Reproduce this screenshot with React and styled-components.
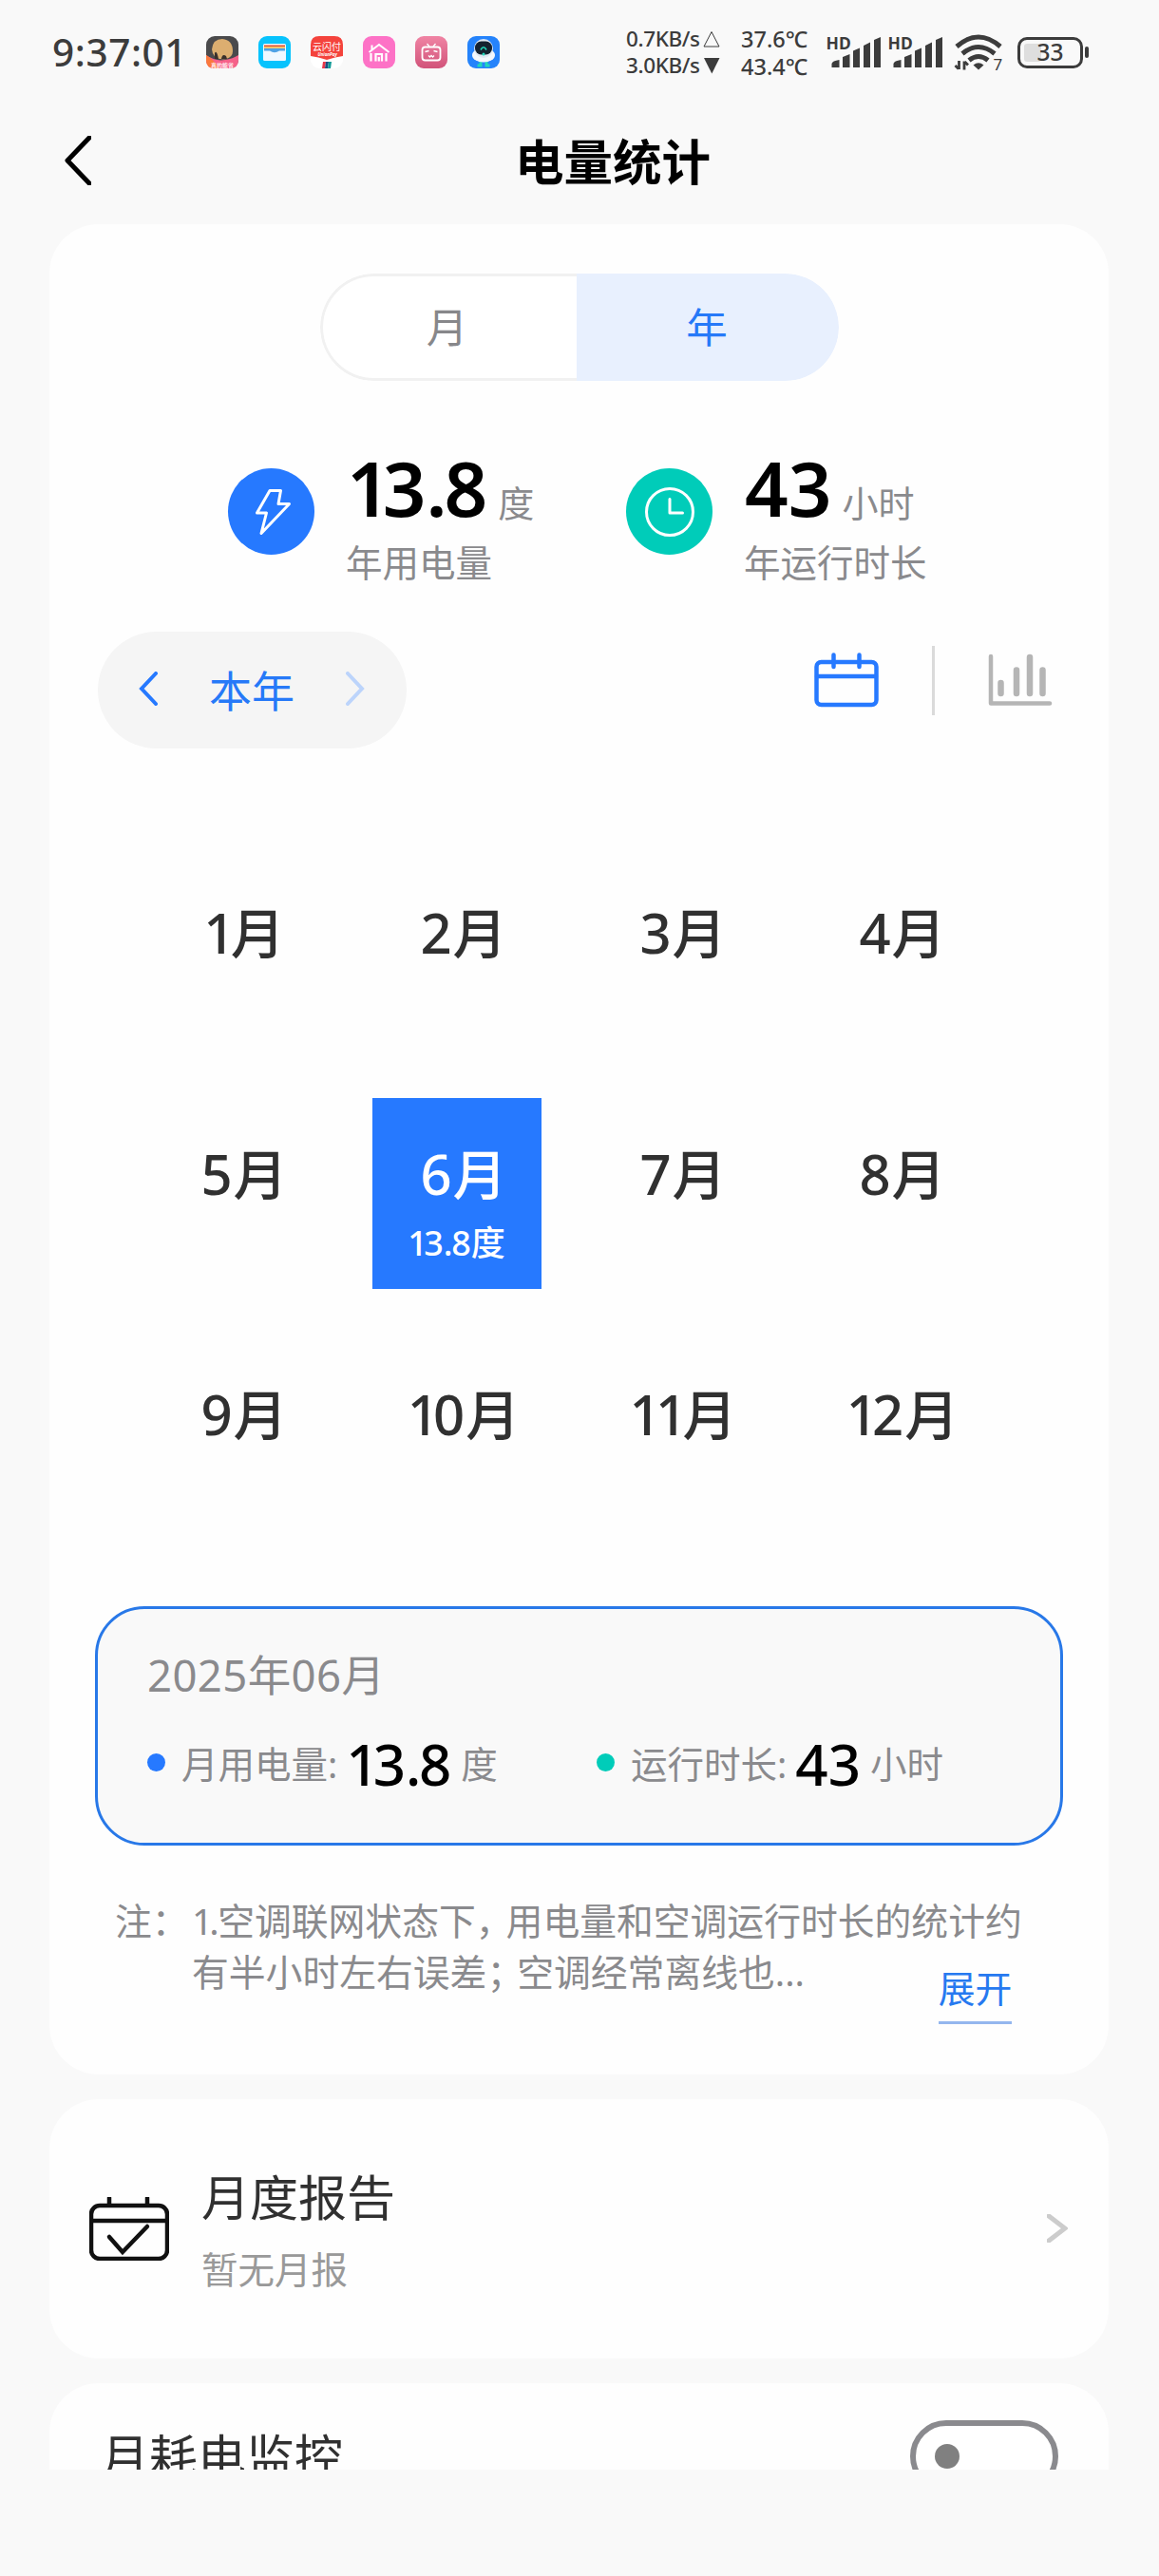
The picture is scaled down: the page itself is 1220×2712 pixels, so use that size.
import React from 'react'
import styled, { createGlobalStyle } from 'styled-components'

const months = ['1', '2', '3', '4', '5', '6', '7', '8', '9', '10', '11', '12']

function App() {
    return (
        <Page>
            <GlobalStyle />
            <StatusBar />
            <Header>
                <BackIcon viewBox="0 0 28 52">
                    <path d="M26 2 L3 26 L26 50" />
                </BackIcon>
                <Title>电量统计</Title>
            </Header>
            <Content>
                <StatsCard />
                <ReportCard>
                    <ReportIcon viewBox="0 0 84 67">
                        <path d="M21 1 V8 M61 1 V8" />
                        <rect x="2" y="9" width="80" height="56" rx="9" />
                        <path d="M2 25 H82" />
                        <path d="M21 42 L35 58 L61 31" />
                    </ReportIcon>
                    <ReportText>
                        <RowTitle>月度报告</RowTitle>
                        <RowHint>暂无月报</RowHint>
                    </ReportText>
                    <MoreIcon viewBox="0 0 22 30">
                        <path d="M2 2 L19 15 L2 28" />
                    </MoreIcon>
                </ReportCard>
                <MonitorCard>
                    <RowTitle>月耗电监控</RowTitle>
                    <Toggle>
                        <Knob />
                    </Toggle>
                </MonitorCard>
            </Content>
        </Page>
    )
}

export default App

// the figure 1 and the point are set narrower than the other figures
function Digits({ children }) {
    return children.split('').map((char, i) => {
        if (char === '1') return <One key={i}>1</One>
        if (char === '.') return <Point key={i}>.</Point>
        return char
    })
}

function StatusBar() {
    return (
        <Bar>
            <Time>9:37:01</Time>
            <AppIcons>
                <GameIcon />
                <WalletIcon />
                <PayIcon />
                <HomeIcon />
                <VideoIcon />
                <RobotIcon />
            </AppIcons>
            <Speeds>
                <Speed>0.7KB/s
                    <svg width="18" height="18" viewBox="0 0 18 18"><path d="M9 1.5 L17 17 H1 Z" fill="none" stroke="#3c3c3c" /></svg>
                </Speed>
                <Speed>3.0KB/s
                    <svg width="18" height="18" viewBox="0 0 18 18"><path d="M1 1 H17.5 L9.3 17.5 Z" fill="#3c3c3c" /></svg>
                </Speed>
            </Speeds>
            <Temps>
                <span>37.6℃</span>
                <span>43.4℃</span>
            </Temps>
            <Signal />
            <Signal />
            <WifiIcon viewBox="0 0 50 39">
                <path d="M2 13 Q25 -7 48 13" strokeWidth="5" />
                <path d="M8 20.5 Q25 6.5 42 20.5" strokeWidth="5" />
                <path d="M15 27.5 Q25 19.5 35 27.5" strokeWidth="5" />
                <path d="M19.5 32.5 Q25 28 30.5 32.5 L25 37.5 Z" fill="#3c3c3c" stroke="none" />
                <path d="M4.5 28 V37 M0.5 33 L4 36.5 M10 37.5 V28.5 M14 32.5 L10.5 29" strokeWidth="2.8" />
                <text x="40.5" y="38" fontSize="17" fill="#3c3c3c" stroke="none">7</text>
            </WifiIcon>
            <Battery>
                <BatteryFill />
                <BatteryText>33</BatteryText>
            </Battery>
            <BatteryCap />
        </Bar>
    )
}

function Signal() {
    return (
        <SignalIcon viewBox="0 0 55 34">
            <text x="-3.5" y="14" fontSize="17.5" fontWeight="700">HD</text>
            <path d="M2.5 33 V29 Q3 26 10.500 25 V33 Z M14 33 V22 L21.5 19 V33 Z M25 33 V15.500 L32 12.500 V33 Z M36 33 V10 L43 6.500 V33 Z M47 33 V4 L54 1 V33 Z" />
        </SignalIcon>
    )
}

function StatsCard() {
    return (
        <Card>
            <Tabs>
                <Tab>月</Tab>
                <Tab $active>年</Tab>
            </Tabs>
            <Summary>
                <Stat $width={419}>
                    <StatIcon $color="#2679ff">
                        <svg width="91" height="91" viewBox="0 0 91 91">
                            <path d="M44 23.5 H55.5 L53 37.5 H64.5 L35 68.5 L40.5 47 H30.5 Z" />
                        </svg>
                    </StatIcon>
                    <div>
                        <StatValue>
                            <BigNum><Digits>13.8</Digits></BigNum>
                            <Unit>度</Unit>
                        </StatValue>
                        <StatLabel>年用电量</StatLabel>
                    </div>
                </Stat>
                <Stat>
                    <StatIcon $color="#00ccb9">
                        <svg width="91" height="91" viewBox="0 0 91 91">
                            <circle cx="46" cy="46" r="24.5" />
                            <path d="M46 32.5 V47 H59.5" />
                        </svg>
                    </StatIcon>
                    <div>
                        <StatValue>
                            <BigNum>43</BigNum>
                            <Unit>小时</Unit>
                        </StatValue>
                        <StatLabel>年运行时长</StatLabel>
                    </div>
                </Stat>
            </Summary>
            <Toolbar>
                <YearPicker>
                    <Arrow viewBox="0 0 20 36"><path d="M18 2 L3 18 L18 34" /></Arrow>
                    <span>本年</span>
                    <Arrow viewBox="0 0 20 36" $muted><path d="M2 2 L17 18 L2 34" /></Arrow>
                </YearPicker>
                <Views>
                    <svg width="68" height="58" viewBox="0 0 68 58" fill="none" stroke="#2679ff" strokeWidth="4.5" strokeLinecap="round">
                        <rect x="2.5" y="10" width="63" height="45" rx="5" />
                        <path d="M3 25 H65" />
                        <path d="M20.5 2.5 V15 M47.5 2.5 V15" />
                    </svg>
                    <Divider />
                    <svg width="68" height="56" viewBox="0 0 68 56" fill="none" stroke="#b5b5b5" strokeLinecap="round">
                        <path d="M3 3 V52.5 H65" strokeWidth="4.5" strokeLinejoin="round" />
                        <path d="M13.5 31 V42 M30 17.5 V42 M44 4 V42 M57.5 17.5 V42" strokeWidth="6.5" />
                    </svg>
                </Views>
            </Toolbar>
            <MonthGrid>
                {months.map(m => (
                    <Month key={m} $active={m === '6'}>
                        <MonthName><Digits>{m}</Digits><i>月</i></MonthName>
                        {m === '6' && <MonthUsage><Digits>13.8</Digits><i>度</i></MonthUsage>}
                    </Month>
                ))}
            </MonthGrid>
            <Detail>
                <DetailDate>2025年06月</DetailDate>
                <DetailRow>
                    <DetailItem $width={473}>
                        <Dot $color="#2679ff" />
                        <span>月用电量:</span>
                        <Num><Digits>13.8</Digits></Num>
                        <span>度</span>
                    </DetailItem>
                    <DetailItem>
                        <Dot $color="#00ccb9" />
                        <span>运行时长:</span>
                        <Num>43</Num>
                        <span>小时</span>
                    </DetailItem>
                </DetailRow>
            </Detail>
            <Note>
                <NoteLabel>注：</NoteLabel>
                <div>
                    <div><Digits>1.</Digits>空调联网状态下<Mark>，</Mark>用电量和空调运行时长的统计约</div>
                    <div>有半小时左右误差<Mark>；</Mark>空调经常离线也...</div>
                </div>
                <Expand>展开</Expand>
            </Note>
        </Card>
    )
}

function GameIcon() {
    return (
        <AppIcon viewBox="0 0 34 34">
            <rect width="34" height="34" rx="9" fill="#4a4a4c" />
            <path d="M0 20 Q10 27 20 25 Q28 24 34 20 V25 Q34 34 25 34 H9 Q0 34 0 25 Z" fill="#f6618a" />
            <path d="M0 20 Q8 25 14 34 H9 Q0 34 0 25 Z" fill="#fb7a3c" />
            <path d="M6 14 Q7 3 17 3 Q28 4 28 16 Q28 22 21 24 Q7 26 6 14 Z" fill="#dcae70" />
            <path d="M9 24 V18 Q11 14 13 24 Z M16 24 Q17 18 21 21 L22 24 Z" fill="#3a302b" />
            <text x="5" y="33" fontSize="6" fontWeight="700" fill="#ffe9ee">真的能省</text>
        </AppIcon>
    )
}

function WalletIcon() {
    return (
        <AppIcon viewBox="0 0 34 34">
            <rect width="34" height="34" rx="9" fill="#07c3fd" />
            <rect x="5" y="8" width="24" height="18" rx="1.5" fill="#eff8ff" />
            <path d="M6 9.5 H28 V11 H6 Z" fill="#e0522f" />
            <path d="M6 11 H28 V13 H6 Z" fill="#f2c572" />
            <path d="M6 13 H28 V15.5 H22 Q17 19 12 15.5 H6 Z" fill="#4ea2e6" />
        </AppIcon>
    )
}

function PayIcon() {
    return (
        <AppIcon viewBox="0 0 34 34">
            <rect width="34" height="34" rx="9" fill="#fff" />
            <path d="M0 9 Q0 0 9 0 H25 Q34 0 34 9 V21 Q26 22 17 25 Q8 22 0 21 Z" fill="#f4433c" />
            <text x="2" y="15" fontSize="10" fill="#fff">云闪付</text>
            <text x="7.5" y="21" fontSize="4.5" fontWeight="700" fontStyle="italic" fill="#fff">UnionPay</text>
            <path d="M13 27 H16 L15 34 H12 Z" fill="#e8384a" />
            <path d="M16 27 H19 L18 34 H15 Z" fill="#1d4f80" />
            <path d="M19 27 H22 L21 34 H18 Z" fill="#0d9a96" />
        </AppIcon>
    )
}

function HomeIcon() {
    return (
        <AppIcon viewBox="0 0 34 34">
            <rect width="34" height="34" rx="9" fill="#fd72c6" />
            <path d="M6.5 17 L17 9 L27.5 17 M9.5 14 V9.5" fill="none" stroke="#fff" strokeWidth="2" />
            <path d="M8.5 26.5 V18 M13.5 26.5 V19 H20 V26.5 M16.8 26.5 V22 M24.5 26.5 V18" fill="none" stroke="#fff" strokeWidth="2.2" />
        </AppIcon>
    )
}

function VideoIcon() {
    return (
        <AppIcon viewBox="0 0 34 34">
            <defs>
                <linearGradient id="video" x1="0" y1="0" x2="0" y2="1">
                    <stop offset="0" stopColor="#f084a4" />
                    <stop offset="1" stopColor="#d1547a" />
                </linearGradient>
            </defs>
            <rect width="34" height="34" rx="9" fill="url(#video)" />
            <rect x="7.5" y="11.5" width="19" height="14" rx="3" fill="none" stroke="#fff" strokeWidth="1.8" />
            <path d="M12.5 8 L15 11 M21.5 8 L19 11 M10.5 16.5 L14.5 15.5 M19.5 15.5 L23.5 16.5 M14 20.5 L15.5 22 L17 20.5 L18.5 22 L20 20.5" fill="none" stroke="#fff" strokeWidth="1.3" />
        </AppIcon>
    )
}

function RobotIcon() {
    return (
        <AppIcon viewBox="0 0 34 34">
            <rect width="34" height="34" rx="9" fill="#2583fb" />
            <path d="M14 25 V31 H10.5 M20 25 V31 H23.5" fill="none" stroke="#20d8ba" strokeWidth="3" />
            <ellipse cx="17" cy="20" rx="12" ry="7.5" fill="#f3f7fc" />
            <circle cx="17" cy="13" r="10" fill="#dfe8f2" />
            <rect x="8" y="5.5" width="18" height="14" rx="6.5" fill="#15222f" />
            <path d="M14 14.5 Q17 9 20 14.5" fill="none" stroke="#20d8ba" strokeWidth="1.6" />
            <circle cx="17" cy="19" r="1.5" fill="#20d8ba" />
        </AppIcon>
    )
}

const GlobalStyle = createGlobalStyle`
    body {
        margin: 0;
        background: #f9f9f9;
        font-family: "Noto Sans", "Noto Sans CJK SC", sans-serif;
    }
    i {
        font-style: normal;
    }
    svg {
        display: block;
        flex-shrink: 0;
    }
`

const Page = styled.div`
    width: 1220px;
    height: 2712px;
    overflow: hidden;
    background: #f9f9f9;
    color: #303030;
`

const One = styled.span`
    letter-spacing: -0.1em;
`

const Point = styled.span`
    letter-spacing: -0.04em;
`

const Bar = styled.div`
    display: flex;
    align-items: center;
    height: 110px;
    padding-left: 55px;
    box-sizing: border-box;
    color: #3c3c3c;
    white-space: nowrap;
`

const Time = styled.div`
    width: 162px;
    font-size: 40.5px;
    font-weight: 500;
    line-height: 58px;
    letter-spacing: 0.6px;
`

const AppIcons = styled.div`
    display: flex;
    gap: 21px;
    width: 442px;
`

const AppIcon = styled.svg`
    width: 34px;
    height: 34px;
`

const Speeds = styled.div`
    width: 121px;
    font-size: 22.5px;
    font-weight: 500;
`

const Speed = styled.div`
    display: flex;
    align-items: center;
    gap: 3px;
    height: 28px;
    line-height: 28px;
    letter-spacing: -0.4px;
`

const Temps = styled.div`
    display: flex;
    flex-direction: column;
    width: 93px;
    padding-top: 2px;
    font-size: 23.5px;
    font-weight: 500;
    line-height: 29px;
`

const SignalIcon = styled.svg`
    width: 55px;
    height: 34px;
    margin-right: 10px;
    fill: #3c3c3c;
    overflow: visible;
`

const WifiIcon = styled.svg`
    width: 50px;
    height: 39px;
    margin: 0 16px 0 2px;
    fill: none;
    stroke: #3c3c3c;
    overflow: visible;
`

const Battery = styled.div`
    position: relative;
    display: flex;
    align-items: center;
    justify-content: center;
    width: 69px;
    height: 33px;
    box-sizing: border-box;
    border: 3px solid #3c3c3c;
    border-radius: 10px;
`

const BatteryFill = styled.div`
    position: absolute;
    left: 4px;
    top: 4px;
    width: 18px;
    height: 19px;
    border-radius: 3px;
    background: #dedede;
`

const BatteryText = styled.span`
    position: relative;
    font-size: 24.5px;
    font-weight: 500;
    line-height: 26px;
`

const BatteryCap = styled.div`
    width: 4px;
    height: 12px;
    margin-left: 2px;
    border-radius: 2px;
    background: #3c3c3c;
`

const Header = styled.div`
    display: flex;
    align-items: center;
    height: 126px;
    padding: 0 0 0 68px;
    box-sizing: border-box;
`

const BackIcon = styled.svg`
    width: 28px;
    height: 52px;
    margin-top: -8px;
    fill: none;
    stroke: #000;
    stroke-width: 5;
    stroke-linecap: round;
    stroke-linejoin: round;
`

const Title = styled.div`
    margin: -7px 0 0 446px;
    font-size: 51.5px;
    font-weight: 700;
    line-height: 70px;
    color: #000;
`

const Content = styled.div`
    display: flex;
    flex-direction: column;
    gap: 26px;
    height: 2364px;
    padding: 0 53px 0 52px;
    overflow: hidden;
`

const Card = styled.div`
    flex-shrink: 0;
    height: 1948px;
    padding: 52px 48px 0;
    box-sizing: border-box;
    border-radius: 52px;
    background: #fefefe;
`

const Tabs = styled.div`
    display: flex;
    width: 546px;
    height: 113px;
    margin-left: 237px;
    border-radius: 57px;
    overflow: hidden;
`

const Tab = styled.div`
    width: ${props => props.$active ? '276px' : '270px'};
    padding-right: ${props => props.$active ? '2px' : '6px'};
    box-sizing: border-box;
    border: ${props => props.$active ? 'none' : '3px solid #f1f1f1'};
    border-right: none;
    border-radius: ${props => props.$active ? '0 57px 57px 0' : '57px 0 0 57px'};
    background: ${props => props.$active ? '#e8f0fe' : '#fff'};
    color: ${props => props.$active ? '#2679f8' : '#87878a'};
    font-size: 43.5px;
    line-height: ${props => props.$active ? '113px' : '107px'};
    text-align: center;
`

const Summary = styled.div`
    display: flex;
    height: 192px;
    padding: 72px 0 0 140px;
    box-sizing: border-box;
`

const Stat = styled.div`
    display: flex;
    gap: 34px;
    width: ${props => props.$width ? `${props.$width}px` : 'auto'};
`

const StatIcon = styled.div`
    width: 91px;
    height: 91px;
    margin-top: 20px;
    border-radius: 50%;
    background: ${props => props.$color};
    svg {
        fill: none;
        stroke: #fff;
        stroke-width: 3;
        stroke-linejoin: round;
        stroke-linecap: round;
    }
`

const StatValue = styled.div`
    display: flex;
    align-items: baseline;
    gap: 11px;
    height: 92px;
    line-height: 80px;
`

const BigNum = styled.span`
    font-size: 80px;
    font-weight: 600;
    color: #000;
`

const Unit = styled.span`
    font-size: 38px;
    color: #8a8a8d;
`

const StatLabel = styled.div`
    margin-left: -1px;
    font-size: 38.5px;
    line-height: 54px;
    color: #8a8a8d;
`

const Toolbar = styled.div`
    display: flex;
    justify-content: space-between;
    margin-top: 72px;
    padding: 0 11px 0 3px;
`

const YearPicker = styled.div`
    display: flex;
    align-items: center;
    justify-content: space-between;
    width: 325px;
    height: 123px;
    padding: 0 44px 3px 43px;
    box-sizing: border-box;
    border-radius: 62px;
    background: #f5f5f5;
    color: #2679f8;
    font-size: 45px;
`

const Arrow = styled.svg`
    width: 20px;
    height: 36px;
    fill: none;
    stroke: ${props => props.$muted ? '#bcd4fb' : '#2679ff'};
    stroke-width: 4;
    stroke-linecap: round;
`

const Views = styled.div`
    display: flex;
    align-items: center;
    gap: 56px;
    height: 102px;
`

const Divider = styled.div`
    width: 3px;
    height: 73px;
    background: #dadada;
`

const MonthGrid = styled.div`
    display: grid;
    grid-template-columns: repeat(4, 231px);
    grid-auto-rows: 201px;
    row-gap: 52.5px;
    justify-items: center;
    margin: 114px 0 0 34px;
`

const Month = styled.div`
    width: 178px;
    height: 201px;
    padding-top: 40px;
    box-sizing: border-box;
    background: ${props => props.$active ? '#2679ff' : 'transparent'};
    color: ${props => props.$active ? '#fff' : '#303030'};
    text-align: center;
`

const MonthName = styled.div`
    padding-left: 15px;
    font-size: 58px;
    font-weight: 500;
    line-height: 80px;
    white-space: nowrap;
    i {
        margin-left: 1px;
        font-size: 57px;
    }
`

const MonthUsage = styled.div`
    margin-top: 8px;
    font-size: 36px;
    font-weight: 500;
    line-height: 50px;
    i {
        font-size: 36px;
    }
`

const Detail = styled.div`
    height: 252px;
    margin-top: 81px;
    padding: 39px 0 0 52px;
    box-sizing: border-box;
    border: 3px solid #2878e8;
    border-radius: 52px;
    background: #f9f9f9;
    color: #8a8a8d;
`

const DetailDate = styled.div`
    font-size: 45.5px;
    line-height: 60px;
    letter-spacing: 0.4px;
`

const DetailRow = styled.div`
    display: flex;
    margin-top: 29px;
`

const DetailItem = styled.div`
    display: flex;
    align-items: center;
    width: ${props => props.$width ? `${props.$width}px` : 'auto'};
    font-size: 38.5px;
    line-height: 70px;
    white-space: nowrap;
`

const Dot = styled.div`
    width: 19px;
    height: 19px;
    margin: 0 17px 3px 0;
    border-radius: 50%;
    background: ${props => props.$color};
`

const Num = styled.span`
    margin: 0 10px 0 9px;
    font-size: 60px;
    font-weight: 500;
    color: #000;
`

const Note = styled.div`
    display: flex;
    margin-top: 52px;
    padding-left: 21px;
    font-size: 38.8px;
    line-height: 54px;
    color: #8a8a8d;
    white-space: nowrap;
`

const NoteLabel = styled.div`
    width: 81px;
`

const Mark = styled.span`
    letter-spacing: -7px;
`

const Expand = styled.div`
    align-self: flex-start;
    margin: 71px 0 0 -88px;
    padding-bottom: 8px;
    border-bottom: 3px solid #94b6ee;
    color: #2679f0;
`

const ReportCard = styled.div`
    display: flex;
    flex-shrink: 0;
    height: 273px;
    padding: 0 43px 0 42px;
    box-sizing: border-box;
    border-radius: 52px;
    background: #fefefe;
`

const ReportIcon = styled.svg`
    width: 84px;
    height: 67px;
    margin-top: 103px;
    fill: none;
    stroke: #111;
    stroke-width: 4.5;
    stroke-linecap: round;
`

const ReportText = styled.div`
    flex: 1;
    margin: 65px 0 0 34px;
`

const RowTitle = styled.div`
    font-size: 51px;
    line-height: 76px;
    color: #303030;
`

const RowHint = styled.div`
    margin-top: 11px;
    font-size: 38.5px;
    line-height: 54px;
    color: #999;
`

const MoreIcon = styled.svg`
    width: 22px;
    height: 30px;
    margin-top: 121px;
    fill: none;
    stroke: #ccc;
    stroke-width: 5;
    stroke-linecap: round;
`

const MonitorCard = styled.div`
    display: flex;
    flex-shrink: 0;
    justify-content: space-between;
    height: 200px;
    padding: 39px 53px 0 54px;
    box-sizing: border-box;
    border-radius: 52px 52px 0 0;
    background: #fefefe;
`

const Toggle = styled.div`
    display: flex;
    align-items: center;
    width: 156px;
    height: 76px;
    padding-left: 20px;
    box-sizing: border-box;
    border: 6px solid #8a8a8e;
    border-radius: 38px;
    background: #fff;
`

const Knob = styled.div`
    width: 26px;
    height: 26px;
    border-radius: 50%;
    background: #808080;
`
